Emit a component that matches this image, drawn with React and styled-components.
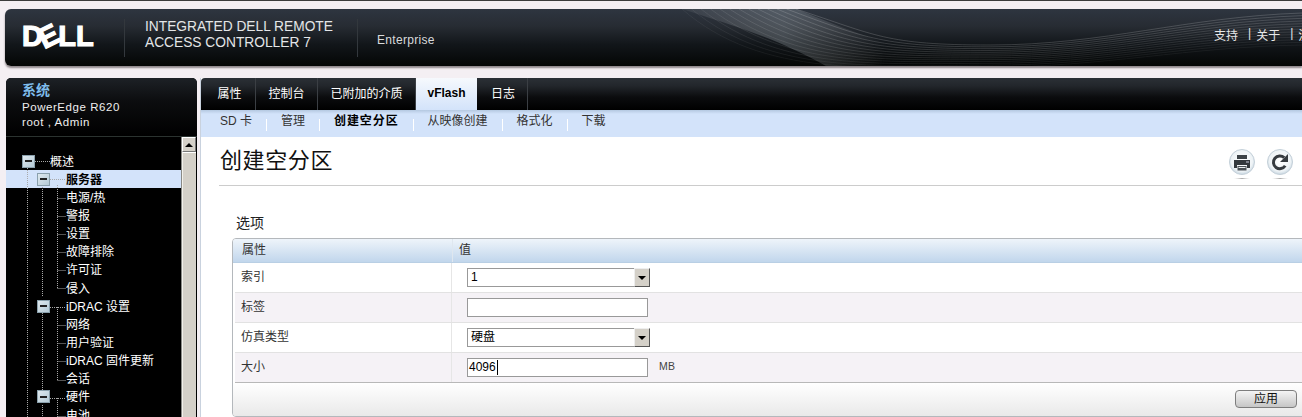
import React from "react";
import styled, { createGlobalStyle } from "styled-components";

const FONT = '"Liberation Sans", "Noto Sans CJK SC", sans-serif';

const Global = createGlobalStyle`
  html, body { margin: 0; padding: 0; background: #f4eff3; overflow: hidden; }
  * { box-sizing: border-box; }
`;

const Page = styled.div`
  width: 1302px; height: 417px; overflow: hidden;
  border-top: 1px solid #3c3c3c;
  padding-top: 8px;
  font-family: ${FONT}; font-size: 12px; color: #333;
  display: flex; flex-direction: column;
`;

/* ---------- header ---------- */
const Header = styled.header`
  position: relative; flex: none; height: 57px; margin-left: 5px;
  border-radius: 6px 0 0 6px;
  background: linear-gradient(#2e3540 0%, #272c33 30%, #12161a 62%, #040605 100%);
  box-shadow: 0 2px 2px #8d8589;
  display: flex; align-items: center; color: #fff; overflow: hidden;
`;
const Waves = styled.svg`
  position: absolute; left: 0; top: 0; width: 1297px; height: 57px; pointer-events: none;
`;
const Logo = styled.div`
  position: relative; flex: none; width: 102px; margin-left: 17px; height: 24px; margin-top: -3px;
  display: flex; align-items: center;
  font: bold 29px/24px "Liberation Sans", sans-serif; color: #fff;
  -webkit-text-stroke: 1.2px #fff;
`;
const LogoD = styled.span`letter-spacing: -1px;`;
const LogoE = styled.span`display: inline-block; transform: rotate(-26deg); margin: 0 0 0 -3px;`;
const LogoL = styled.span`letter-spacing: 0; margin-left: 0;`;
const VRule = styled.div`
  position: relative; flex: none; width: 1px; height: 38px; background: #33383d;
`;
const Product = styled.div`
  position: relative; flex: none; width: 212px; margin-left: 20px; margin-top: -6px;
  font-size: 13.75px; line-height: 16px; color: #e4e6e8;
`;
const Edition = styled.div`
  position: relative; flex: 1; margin-left: 19px; margin-top: 5px; font-size: 12px; color: #d8dadc; letter-spacing: .3px;
`;
const TopLinks = styled.nav`
  position: relative; flex: none; width: 88px; margin-top: -6px; display: flex; gap: 7px; white-space: nowrap;
  color: #e8e8e8; font-size: 12px;
`;
const TopSep = styled.span`color: #e8e8e8; margin: 0 -2px 0 3px;`;

/* ---------- body ---------- */
const Body = styled.div`display: flex; flex: 1; min-height: 0; margin-top: 12px;`;

const Sidebar = styled.aside`
  flex: none; width: 191px; margin-left: 6px; background: #000;
  border-radius: 5px 5px 0 0; display: flex; flex-direction: column; overflow: hidden;
`;
const SideHead = styled.div`
  flex: none; height: 59px; padding: 4px 16px 0; color: #eee; line-height: 15px; font-size: 11.5px;
  background: linear-gradient(#1d2126 0%, #0c0d0f 40%, #000 100%);
  border-bottom: 1px solid #2b3330; letter-spacing: .55px;
`;
const SideTitle = styled.div`
  color: #7fbdec; font-weight: bold; font-size: 14px; line-height: 16px; margin-bottom: 2px; letter-spacing: 0;
`;
const TreeWrap = styled.div`flex: 1; display: flex; min-height: 0;`;
const Tree = styled.div`position: relative; width: 175px; padding-top: 15px; flex: none;`;
const TreeLines = styled.svg`
  position: absolute; left: 0; top: 0; width: 175px; height: 290px; pointer-events: none;
`;
const Row = styled.div`
  height: 18.15px; display: flex; align-items: center; white-space: nowrap;
  padding-left: ${p => p.$indent}px;
  background: ${p => (p.$active ? "#d3e3fa" : "transparent")};
  color: ${p => (p.$active ? "#000" : "#fff")};
  font-weight: ${p => (p.$active ? "bold" : "normal")};
  font-size: 12px;
`;
const RowLabel = styled.span`margin-top: -2px;`;
const Expander = styled.span`
  position: relative; z-index: 1; flex: none; width: 13px; height: 13px; margin-right: ${p => p.$gap}px;
  background: linear-gradient(135deg, #dfe9ef, #b4cad6);
  border: 1px solid #8aa0ac;
  display: flex; align-items: center; justify-content: center;
  &::after { content: ""; width: 7px; height: 2px; background: #222; }
`;
const Scrollbar = styled.div`
  flex: none; width: 15px; background: #d4d0c8; border-left: 1px solid #8a8a86;
  display: flex; flex-direction: column;
`;
const ScrollBtn = styled.div`
  flex: none; height: 15px; background: #d4d0c8;
  border: 1px solid; border-color: #fff #777 #777 #fff;
  display: flex; align-items: center; justify-content: center;
  &::after { content: ""; border: 4px solid transparent; border-top: 0; border-bottom: 4px solid #000; }
`;
const ScrollThumb = styled.div`flex: 1; border-top: 1px solid #fff; border-left: 1px solid #f2f0ea;`;

/* ---------- main ---------- */
const Main = styled.main`
  flex: none; width: 1102px; margin-left: 3px; background: #fff; display: flex; flex-direction: column; overflow: hidden;
  border-left: 1px solid #c9d2de;
`;
const TabBar = styled.div`
  flex: none; height: 32px; display: flex;
  background: linear-gradient(#2b3036 0%, #22262b 25%, #0b0c0e 60%, #000 100%);
  border-radius: 4px 0 0 0;
`;
const Tab = styled.div`
  flex: none; width: ${p => p.$w}px; display: flex; align-items: center; justify-content: center; font-size: 12px;
  padding-bottom: 3px;
  color: ${p => (p.$active ? "#000" : "#fff")};
  font-weight: ${p => (p.$active ? "bold" : "normal")};
  background: ${p => (p.$active ? "linear-gradient(#f6f9fd, #d3e3fa)" : "transparent")};
  border-right: ${p => (p.$active ? "0" : "1px solid #3b3f44")};
  &:first-child { padding-left: 3px; }
  &:last-child { padding-left: 2px; }
`;
const SubNav = styled.div`
  flex: none; height: 27px; padding-left: 19px; display: flex; gap: 14px;
  background: linear-gradient(#b4c8e0 0, #d3e3fa 4px);
`;
const SubItem = styled.div`
  line-height: 22px; font-size: 12px; white-space: nowrap;
  color: ${p => (p.$active ? "#000" : "#333")};
  font-weight: ${p => (p.$active ? "bold" : "normal")};
  letter-spacing: ${p => (p.$active ? ".9px" : "0")};
`;
const SubSep = styled.div`flex: none; width: 1px; height: 12px; margin-top: 9px; background: #fff;`;
const TitleBar = styled.div`
  flex: none; height: 49px; margin-left: 18px; padding: 0 9px 7px 1px;
  border-bottom: 1px solid #cccccc;
  display: flex; align-items: center; justify-content: space-between;
`;
const Title = styled.h1`margin: 0; font-size: 22px; font-weight: normal; color: #111; letter-spacing: .6px;`;
const Tools = styled.div`display: flex; gap: 12px; margin-top: 13px;`;
const RoundIcon = styled.svg`display: block; width: 26px; height: 30px;`;
const Section = styled.section`flex: 1; padding-left: 31px; margin-right: -10px;`;
const SectionTitle = styled.h2`
  margin: 28px 0 6px 4px; height: 18px; line-height: 18px; font-size: 14px; font-weight: normal; color: #222;
`;
const Card = styled.div`
  border: 1px solid #b4b8bc; border-radius: 4px; overflow: hidden; background: #fff;
`;
const TableRow = styled.div`
  display: grid; grid-template-columns: 217px 1fr; height: 30px;
  margin-left: 2px;
  background: ${p => (p.$alt ? "#f5f2f6" : "#fff")};
  border-bottom: 1px solid ${p => (p.$last ? "#b8b8b8" : "#e2e2e2")};
`;
const HeadRow = styled.div`
  display: grid; grid-template-columns: 219px 1fr; height: 24px;
  background: linear-gradient(#eef4fa, #c1d6ec);
  border-bottom: 1px solid #b9cfe4; color: #333;
`;
const HeadCell = styled.div`
  padding-left: 9px; line-height: 22px; font-size: 12px;
  & + & { border-left: 1px solid #dfe7ef; padding-left: 6px; }
`;
const LabelCell = styled.div`
  padding-left: 6px; line-height: 28px; font-size: 12px; color: #333; border-right: 1px solid #e6e6e6;
`;
const ValueCell = styled.div`padding-left: 15px; display: flex; align-items: center; gap: 11px; font-size: 12px;`;
const Field = styled.div`
  width: 181px; height: 19px; border: 1px solid #999; background: #fff; color: #000;
  display: flex; align-items: center; padding-left: ${p => p.$pad || 0}px; font-size: 12px; line-height: 17px;
`;
const SelectBox = styled(Field)`width: 183px; position: relative; border-right: 0;`;
const SelectArrow = styled.span`
  position: absolute; right: 0; top: -1px; width: 16px; height: 19px; background: #d4d0c8;
  border: 1px solid; border-color: #eee #555 #555 #eee;
  display: flex; align-items: center; justify-content: center;
  &::after { content: ""; border: 4px solid transparent; border-bottom: 0; border-top: 4px solid #000; }
`;
const Caret = styled.span`flex: none; width: 1px; height: 15px; background: #000; margin-left: 1px;`;
const Unit = styled.span`font-size: 10.5px; color: #444; margin-top: -3px; letter-spacing: .3px;`;
const Footer = styled.div`
  height: 33px; padding: 7px 14px 0 0; display: flex; justify-content: flex-end;
  background: linear-gradient(#fff, #e9e9e9);
`;
const ApplyBtn = styled.button`
  width: 62px; height: 18px; padding: 0; border: 1px solid #7d7d7d; border-radius: 4px;
  background: linear-gradient(#f4f4f4, #c6c6c6); color: #111; font: 12px/16px ${FONT};
`;

const curve = t => {
  const sx = 791 - t * 114;
  const my = 36 + t * 22;
  return `M${sx} 0C${sx + 80} ${26 + t * 44} ${880 - t * 10} ${my} 985 ${my}C1100 ${my} 1180 ${8 + t * 30} 1297 ${4 + t * 32}`;
};

const HeaderWaves = () => (
  <Waves viewBox="0 0 1297 57">
    <defs>
      <linearGradient id="glow" x1="677" y1="0" x2="880" y2="0" gradientUnits="userSpaceOnUse">
        <stop offset="0" stopColor="#fff" stopOpacity=".05" />
        <stop offset=".5" stopColor="#c8d4dc" stopOpacity=".24" />
        <stop offset="1" stopColor="#fff" stopOpacity="0" />
      </linearGradient>
    </defs>
    <path d="M677 0H791C850 24 880 34 900 40L880 57H821C770 28 720 14 677 0Z" fill="url(#glow)" />
    {Array.from({ length: 13 }, (_, i) => (
      <path
        key={i}
        d={curve(i / 12)}
        fill="none"
        stroke="#fff"
        strokeWidth=".8"
        strokeOpacity={0.22 - (i / 12) * 0.15}
      />
    ))}
  </Waves>
);

const treeRows = [
  { t: "概述", indent: 16, exp: 15 },
  { t: "服务器", indent: 31, exp: 16, active: true },
  { t: "电源/热", indent: 60 },
  { t: "警报", indent: 60 },
  { t: "设置", indent: 60 },
  { t: "故障排除", indent: 60 },
  { t: "许可证", indent: 60 },
  { t: "侵入", indent: 60 },
  { t: "iDRAC 设置", indent: 31, exp: 16 },
  { t: "网络", indent: 60 },
  { t: "用户验证", indent: 60 },
  { t: "iDRAC 固件更新", indent: 60 },
  { t: "会话", indent: 60 },
  { t: "硬件", indent: 31, exp: 16 },
  { t: "电池", indent: 60 },
];

const guideSegments = [
  "M21.5 31V290",
  "M36.5 48V160M36.5 176V255M36.5 268V290",
  "M51.5 48V151.5M51.5 170V243M51.5 261V290",
  "M29 24.5H44", "M44 42.5H60",
  "M51.5 61.5H60", "M51.5 79.5H60", "M51.5 97.5H60", "M51.5 115.5H60", "M51.5 133.5H60", "M51.5 151.5H60",
  "M44 170.5H60", "M51.5 188.5H60", "M51.5 206.5H60", "M51.5 224.5H60", "M51.5 243.5H60",
  "M44 261.5H60", "M51.5 279.5H60",
];

const subItems = ["SD 卡", "管理", "创建空分区", "从映像创建", "格式化", "下载"];
const tabs = [["属性", 55], ["控制台", 62], ["已附加的介质", 98], ["vFlash", 61, true], ["日志", 51]];

export default function App() {
  return (
    <Page>
      <Global />
      <Header>
        <HeaderWaves />
        <Logo>
          <LogoD>D</LogoD>
          <LogoE>E</LogoE>
          <LogoL>LL</LogoL>
        </Logo>
        <VRule />
        <Product>
          INTEGRATED DELL REMOTE
          <br />
          ACCESS CONTROLLER 7
        </Product>
        <VRule />
        <Edition>Enterprise</Edition>
        <TopLinks>
          <span>支持</span>
          <TopSep>|</TopSep>
          <span>关于</span>
          <TopSep>|</TopSep>
          <span>注销</span>
        </TopLinks>
      </Header>
      <Body>
        <Sidebar>
          <SideHead>
            <SideTitle>系统</SideTitle>
            PowerEdge R620
            <br />
            root , Admin
          </SideHead>
          <TreeWrap>
            <Tree>
              {treeRows.map(r => (
                <Row key={r.t} $indent={r.indent} $active={r.active}>
                  {r.exp ? <Expander $gap={r.exp} /> : null}
                  <RowLabel>{r.t}</RowLabel>
                </Row>
              ))}
              <TreeLines viewBox="0 0 175 290">
                <path d={guideSegments.join("")} fill="none" stroke="#a8a8a8" strokeDasharray="1 1" />
              </TreeLines>
            </Tree>
            <Scrollbar>
              <ScrollBtn />
              <ScrollThumb />
            </Scrollbar>
          </TreeWrap>
        </Sidebar>
        <Main>
          <TabBar>
            {tabs.map(([t, w, a]) => (
              <Tab key={t} $w={w} $active={a}>{t}</Tab>
            ))}
          </TabBar>
          <SubNav>
            {subItems.map((s, i) => (
              <React.Fragment key={s}>
                {i > 0 && <SubSep />}
                <SubItem $active={i === 2}>{s}</SubItem>
              </React.Fragment>
            ))}
          </SubNav>
          <TitleBar>
            <Title>创建空分区</Title>
            <Tools>
              <RoundIcon viewBox="0 0 26 30">
                <defs>
                  <radialGradient id="ball" cx=".5" cy=".45" r=".6">
                    <stop offset="0" stopColor="#fff" />
                    <stop offset=".7" stopColor="#eef3f6" />
                    <stop offset="1" stopColor="#b9cbd8" />
                  </radialGradient>
                  <linearGradient id="sh" x1="0" x2="1" y1="0" y2="0">
                    <stop offset="0" stopColor="#ccc" stopOpacity="0" />
                    <stop offset=".5" stopColor="#aaa" />
                    <stop offset="1" stopColor="#ccc" stopOpacity="0" />
                  </linearGradient>
                </defs>
                <circle cx="13" cy="13" r="12.5" fill="url(#ball)" stroke="#c4d0d9" />
                <rect x="8" y="6" width="10" height="4" fill="#3c4247" />
                <path d="M5 11h16v8h-3v-3H8v3H5z" fill="#33383d" />
                <rect x="8.5" y="17" width="9" height="4.5" fill="#4b5156" />
                <rect x="9.5" y="18" width="7" height="1" fill="#e8ecef" />
                <rect x="17" y="12.5" width="3" height="1" fill="#ccd" />
                <rect x="5" y="29" width="16" height="1" fill="url(#sh)" />
              </RoundIcon>
              <RoundIcon viewBox="0 0 26 30">
                <circle cx="13" cy="13" r="12.5" fill="url(#ball)" stroke="#c4d0d9" />
                <path d="M18.2 16.8A6.4 6.4 0 1 1 17.2 8.6" fill="none" stroke="#363b40" strokeWidth="3" />
                <path d="M21 5v8h-8z" fill="#363b40" />
                <rect x="5" y="29" width="16" height="1" fill="url(#sh)" />
              </RoundIcon>
            </Tools>
          </TitleBar>
          <Section>
            <SectionTitle>选项</SectionTitle>
            <Card>
              <HeadRow>
                <HeadCell>属性</HeadCell>
                <HeadCell>值</HeadCell>
              </HeadRow>
              <TableRow>
                <LabelCell>索引</LabelCell>
                <ValueCell>
                  <SelectBox $pad={3}>1<SelectArrow /></SelectBox>
                </ValueCell>
              </TableRow>
              <TableRow $alt>
                <LabelCell>标签</LabelCell>
                <ValueCell><Field /></ValueCell>
              </TableRow>
              <TableRow>
                <LabelCell>仿真类型</LabelCell>
                <ValueCell>
                  <SelectBox $pad={3}>硬盘<SelectArrow /></SelectBox>
                </ValueCell>
              </TableRow>
              <TableRow $alt $last>
                <LabelCell>大小</LabelCell>
                <ValueCell>
                  <Field $pad={1}>4096<Caret /></Field>
                  <Unit>MB</Unit>
                </ValueCell>
              </TableRow>
              <Footer>
                <ApplyBtn>应用</ApplyBtn>
              </Footer>
            </Card>
          </Section>
        </Main>
      </Body>
    </Page>
  );
}
